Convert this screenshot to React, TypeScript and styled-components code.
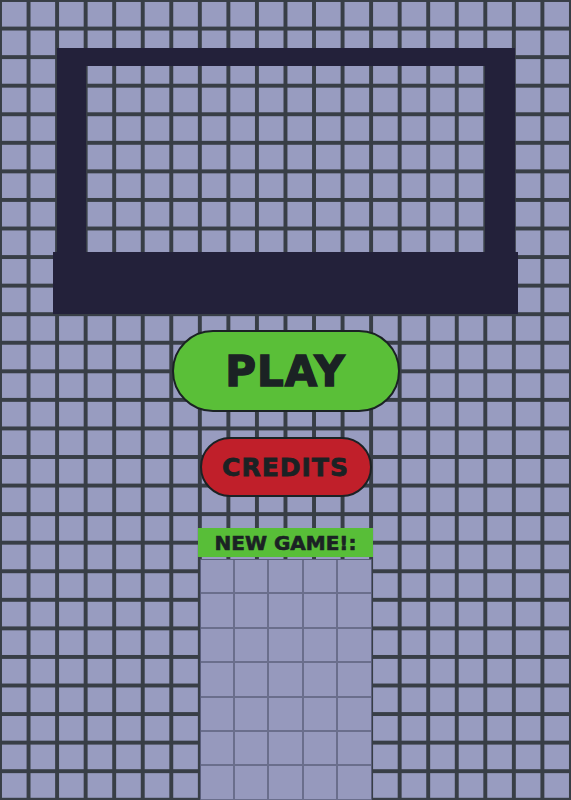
import styled, { createGlobalStyle } from "styled-components";

const GlobalStyle = createGlobalStyle`
  html, body {
    margin: 0;
    padding: 0;
    overflow: hidden;
  }
  body {
    font-family: "DejaVu Sans", "Liberation Sans", Arial, sans-serif;
  }
`;

const TILE = "#989cc0";
const GROUT = "#383e46";
const INK = "#1b2224";

// tiled floor behind everything
const Page = styled.div`
  width: 571px;
  height: 800px;
  overflow: hidden;
  display: flex;
  flex-direction: column;
  align-items: center;
  background-color: ${TILE};
  background-image:
    linear-gradient(to right, ${GROUT} 0 2px, transparent 2px calc(100% - 2px), ${GROUT} calc(100% - 2px)),
    linear-gradient(to bottom, ${GROUT} 0 2px, transparent 2px calc(100% - 2px), ${GROUT} calc(100% - 2px));
  background-size: 28.55px 28.571px;

  & > * {
    flex-shrink: 0;
  }
`;

const Logo = styled.div`
  margin-top: 48px;
  display: flex;
  flex-direction: column;
  align-items: center;
`;

const Screen = styled.div`
  box-sizing: border-box;
  width: 458px;
  height: 204px;
  border-style: solid;
  border-color: #23213a;
  border-width: 18px 30px 0 29px;
`;

const Stand = styled.div`
  width: 465px;
  height: 62px;
  background: #23213a;
`;

const Pill = styled.button<{ $color: string; $w: number; $h: number; $size: number; $stroke: number }>`
  box-sizing: border-box;
  width: ${({ $w }) => $w}px;
  height: ${({ $h }) => $h}px;
  border-radius: ${({ $h }) => $h / 2}px;
  border: 2px solid ${INK};
  background: ${({ $color }) => $color};
  color: ${INK};
  font-family: "DejaVu Sans", "Liberation Sans", Arial, sans-serif;
  font-weight: 700;
  font-size: ${({ $size }) => $size}px;
  letter-spacing: 1px;
  -webkit-text-stroke: ${({ $stroke }) => $stroke}px ${INK};
  display: flex;
  align-items: center;
  justify-content: center;
  padding: 0;
  cursor: pointer;
`;

const PlayButton = styled(Pill)`
  margin-top: 16px;
`;

const CreditsButton = styled(Pill)`
  margin-top: 25px;
`;

const NewGameLabel = styled.div`
  margin-top: 31px;
  width: 175px;
  height: 29px;
  background: #58be38;
  color: ${INK};
  font-weight: 700;
  font-size: 20px;
  -webkit-text-stroke: 0.6px ${INK};
  display: flex;
  align-items: center;
  justify-content: center;
`;

const Board = styled.div`
  margin-top: 2px;
  width: 172px;
  box-sizing: border-box;
  border: 1px solid #5a5e7c;
  border-radius: 0 0 4px 4px;
  background: #6a6e8c;
  display: grid;
  grid-template-columns: repeat(5, 1fr);
  gap: 2px;
`;

const Cell = styled.div`
  height: 32.4px;
  background: #9699bd;
`;

export default function App() {
  const cells = Array.from({ length: 5 * 8 }, (_, i) => i);
  return (
    <>
      <GlobalStyle />
      <Page>
        <Logo>
          <Screen />
          <Stand />
        </Logo>
        <PlayButton $color="#5abf38" $w={228} $h={82} $size={42} $stroke={1.4}>
          PLAY
        </PlayButton>
        <CreditsButton $color="#c01f2a" $w={172} $h={60} $size={25} $stroke={0.8}>
          CREDITS
        </CreditsButton>
        <NewGameLabel>NEW GAME!:</NewGameLabel>
        <Board>
          {cells.map((i) => (
            <Cell key={i} />
          ))}
        </Board>
      </Page>
    </>
  );
}
